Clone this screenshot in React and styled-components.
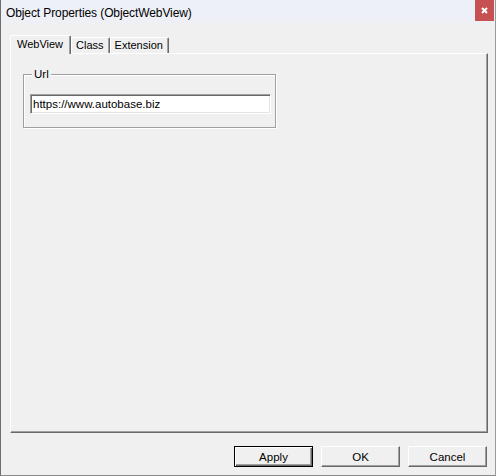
import React, { useState } from "react";
import styled, { createGlobalStyle } from "styled-components";

const GlobalStyle = createGlobalStyle`
  html, body {
    margin: 0;
    padding: 0;
    background: #f0f0f0;
  }
  * {
    box-sizing: border-box;
  }
`;

const Window = styled.div`
  width: 496px;
  height: 476px;
  display: flex;
  flex-direction: column;
  background: #f0f0f0;
  border-left: 1px solid #6e6e6e;
  border-right: 1px solid #9a9a9a;
  border-bottom: 1px solid #8a8a8a;
  font-family: "Liberation Sans", Arial, sans-serif;
  font-size: 11px;
  color: #000;
`;

const TitleBar = styled.div`
  height: 27px;
  display: flex;
  align-items: flex-start;
  background: linear-gradient(#eef0f8, #eef0f7 70%, #f0f0f0);
`;

const Title = styled.span`
  font-size: 12px;
  line-height: 27px;
  padding-left: 5px;
  letter-spacing: -0.1px;
`;

const CloseButton = styled.button`
  margin-left: auto;
  margin-right: 1px;
  width: 19px;
  height: 21px;
  border: none;
  padding: 0;
  background: #c75050;
  display: flex;
  align-items: center;
  justify-content: center;
`;

const Body = styled.div`
  flex: 1;
  display: flex;
  flex-direction: column;
  padding: 8px 7px 0 9px;
`;

const TabStrip = styled.div`
  display: flex;
  align-items: flex-end;
  height: 18px;
  position: relative;
  z-index: 1;
`;

const Tab = styled.div`
  height: ${(p) => (p.$active ? "19px" : "16px")};
  margin-bottom: ${(p) => (p.$active ? "-1px" : "0")};
  padding: ${(p) => (p.$active ? "2px 7px 0 6px" : "1px 5px 0 4px")};
  background: #f0f0f0;
  border-top: 1px solid #fff;
  border-left: 1px solid #fff;
  border-right: 1px solid #696969;
  box-shadow: inset -1px 0 #a0a0a0;
  border-radius: 1px 2px 0 0;
  font-size: 11px;
  line-height: 13px;
  white-space: nowrap;
  cursor: default;
`;

const Panel = styled.div`
  width: 478px;
  height: 380px;
  border-top: 1px solid #fff;
  border-left: 1px solid #fff;
  border-right: 1px solid #696969;
  border-bottom: 1px solid #696969;
  box-shadow: inset -1px -1px #a0a0a0;
  padding: 20px 0 0 12px;
`;

const GroupBox = styled.div`
  width: 253px;
  height: 54px;
  border: 1px solid #a0a0a0;
  box-shadow: inset 1px 1px #fff, 1px 1px #fff;
  padding: 0 0 0 6px;
`;

const GroupLabel = styled.div`
  width: fit-content;
  margin: -8px 0 0 2px;
  padding: 0 2px;
  font-size: 11.5px;
  line-height: 14px;
  background: #f0f0f0;
  color: #000;
`;

const TextBox = styled.input`
  display: block;
  width: 241px;
  height: 20px;
  margin-top: 13px;
  padding: 0 0 0 2px;
  font-family: "Liberation Sans", Arial, sans-serif;
  font-size: 11.5px;
  color: #000;
  background: #fff;
  border-top: 1px solid #a0a0a0;
  border-left: 1px solid #a0a0a0;
  border-right: 1px solid #fff;
  border-bottom: 1px solid #fff;
  box-shadow: inset 1px 1px #696969, inset -1px -1px #e3e3e3;
  outline: none;
`;

const ButtonRow = styled.div`
  display: flex;
  justify-content: flex-end;
  gap: 8px;
  margin-top: 13px;
  padding-right: 1px;
`;

const Button = styled.button`
  width: 79px;
  height: 21px;
  padding: 0;
  font-family: "Liberation Sans", Arial, sans-serif;
  font-size: 11.5px;
  color: #000;
  background: #f0f0f0;
  border: 1px solid;
  border-color: ${(p) => (p.$default ? "#000" : "#fff #696969 #696969 #fff")};
  box-shadow: ${(p) =>
    p.$default
      ? "inset 1px 1px #fff, inset -1px -1px #696969, inset -2px -2px #a0a0a0"
      : "inset -1px -1px #a0a0a0"};
`;

export default function App() {
  const [tab, setTab] = useState("WebView");
  const [url, setUrl] = useState("https://www.autobase.biz");

  return (
    <>
      <GlobalStyle />
      <Window>
        <TitleBar>
          <Title>Object Properties (ObjectWebView)</Title>
          <CloseButton aria-label="Close">
            <svg width="7" height="7" viewBox="0 0 7 7">
              <path d="M1 1 L6 6 M6 1 L1 6" stroke="#fff" strokeWidth="2" />
            </svg>
          </CloseButton>
        </TitleBar>
        <Body>
          <TabStrip>
            {["WebView", "Class", "Extension"].map((name) => (
              <Tab key={name} $active={tab === name} onClick={() => setTab(name)}>
                {name}
              </Tab>
            ))}
          </TabStrip>
          <Panel>
            {tab === "WebView" && (
              <GroupBox>
                <GroupLabel>Url</GroupLabel>
                <TextBox value={url} onChange={(e) => setUrl(e.target.value)} />
              </GroupBox>
            )}
          </Panel>
          <ButtonRow>
            <Button $default>Apply</Button>
            <Button>OK</Button>
            <Button>Cancel</Button>
          </ButtonRow>
        </Body>
      </Window>
    </>
  );
}
